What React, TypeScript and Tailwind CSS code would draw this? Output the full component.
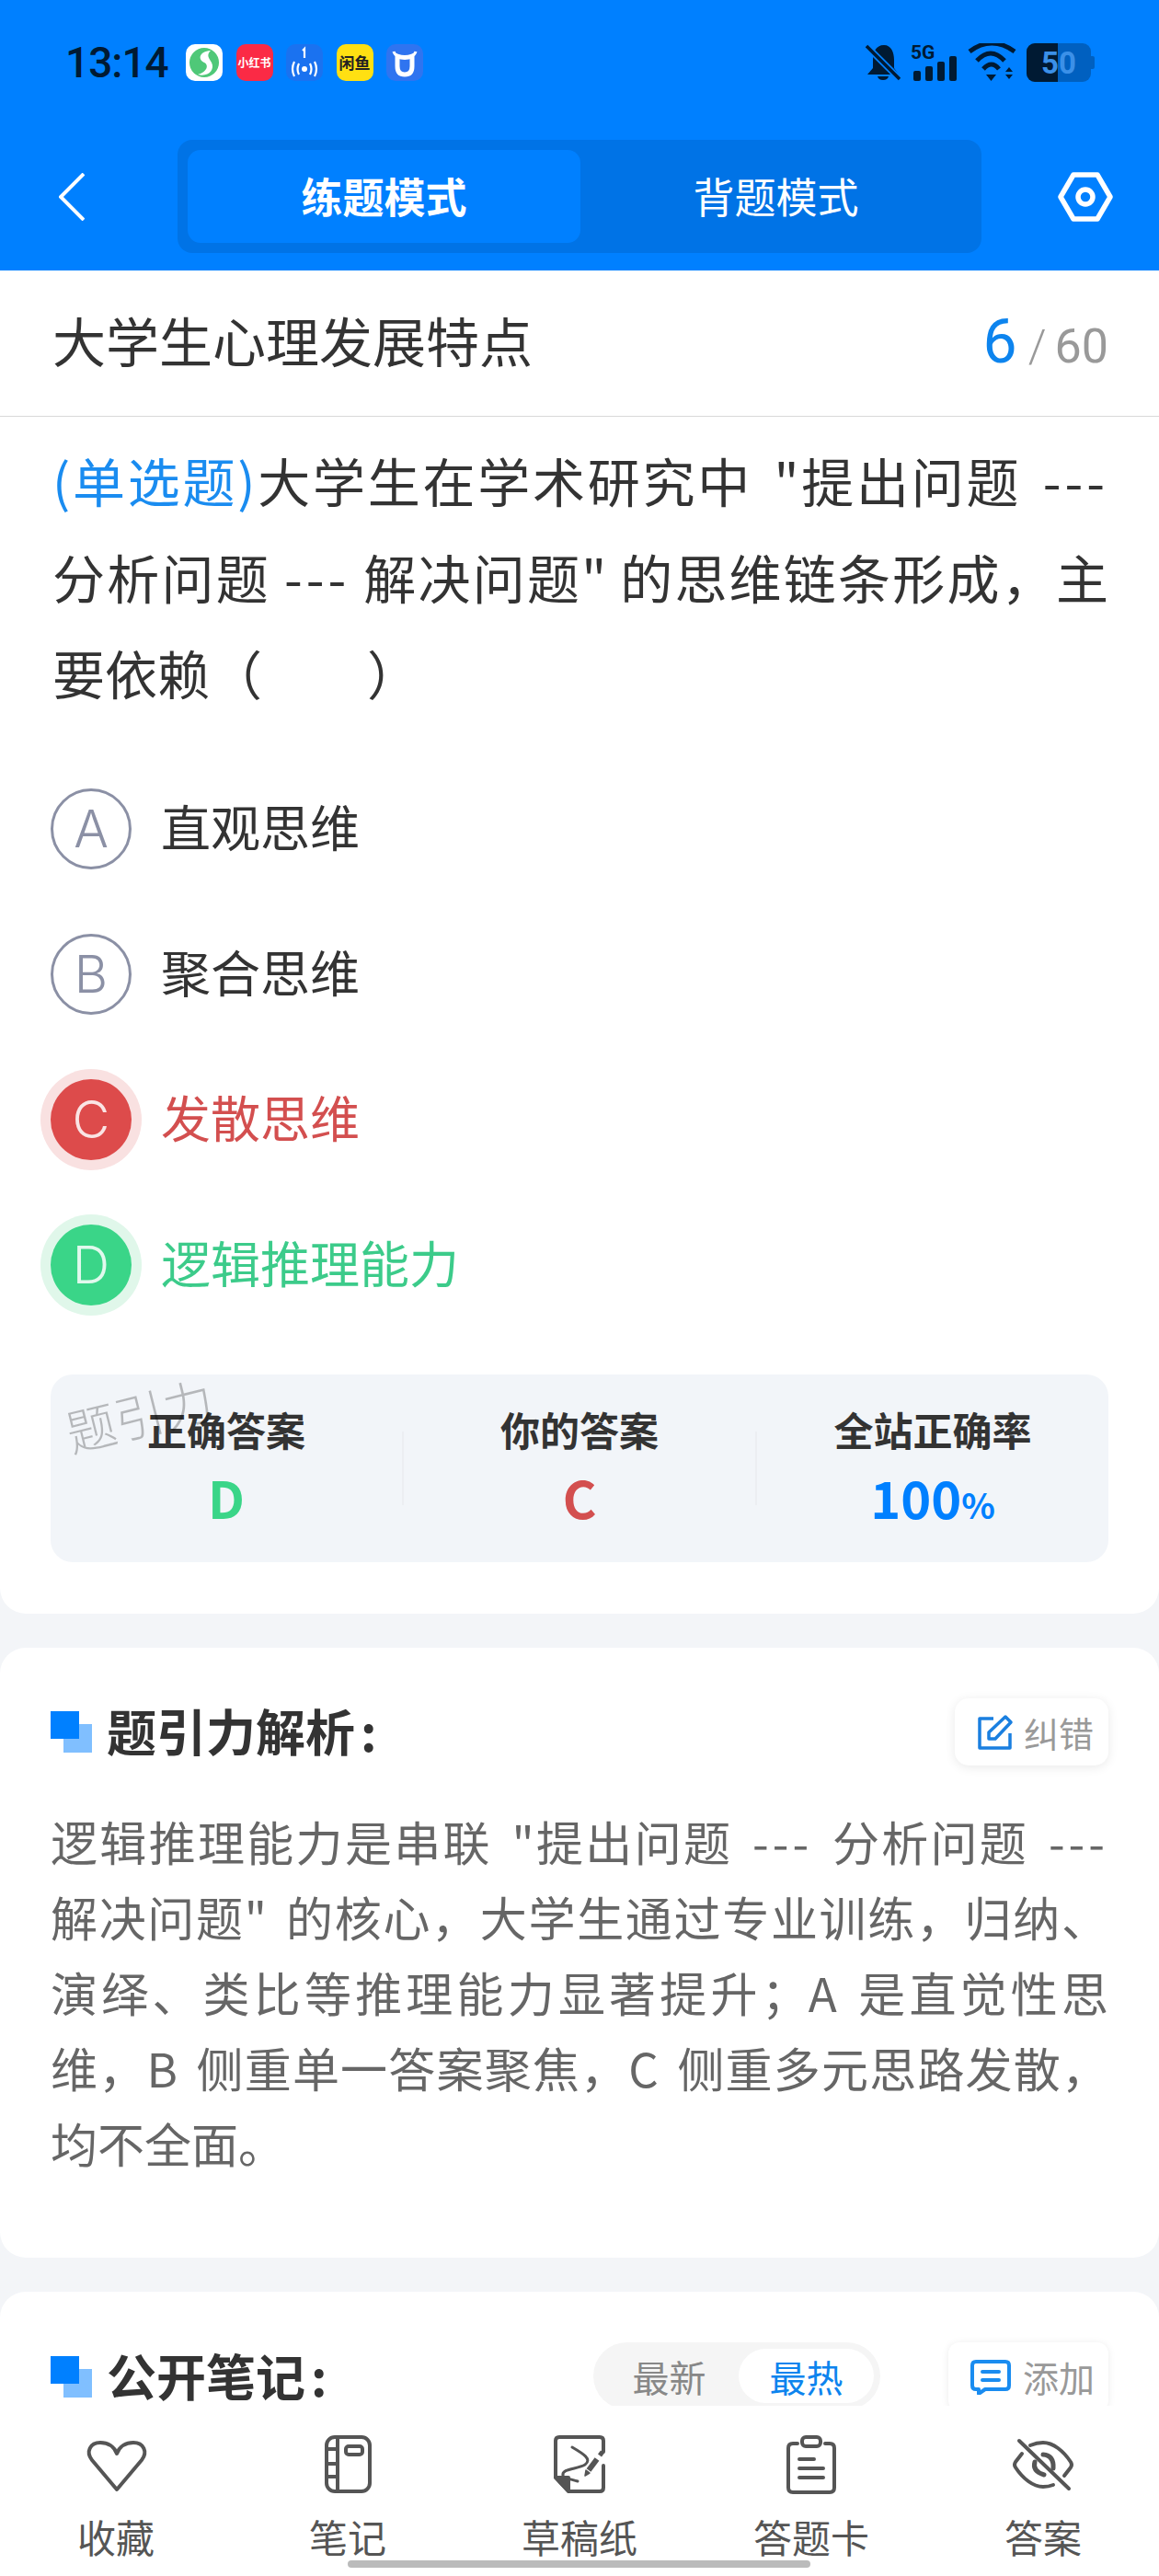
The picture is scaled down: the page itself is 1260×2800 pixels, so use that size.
import React from "react"

const CJK = "font-['Noto_Sans_CJK_SC','Noto_Sans',sans-serif]"

const SectionMark = () => (
  <span className="relative block w-[46px] h-[45px] shrink-0">
    <span className="absolute left-[14px] top-[14px] w-[31px] h-[31px] bg-[#80bfff]" />
    <span className="absolute left-0 top-0 w-[31px] h-[30px] bg-[#0080ff]" />
  </span>
)

const Dash = () => <span className="tracking-[4px]">---</span>

const Option = ({ letter, text, state }: { letter: string; text: string; state?: "wrong" | "right" }) => {
  if (state) {
    const wrong = state === "wrong"
    return (
      <div className="h-[158px] flex items-center">
        <div
          className={
            "w-[88px] h-[88px] rounded-full flex items-center justify-center text-[56px] font-['Inter',sans-serif] font-light text-white/85 " +
            (wrong ? "bg-[#dd4b4b] ring-[11px] ring-[#f9e1e1]" : "bg-[#3ad588] ring-[11px] ring-[#e0f7ea]")
          }
        >
          {letter}
        </div>
        <span className={"ml-[32px] -mt-[6px] text-[54px] " + (wrong ? "text-[#d34f4f]" : "text-[#3ccb8a]")}>{text}</span>
      </div>
    )
  }
  return (
    <div className="h-[158px] flex items-center">
      <div className="w-[88px] h-[88px] rounded-full border-[3px] border-[#8b90a5] flex items-center justify-center text-[56px] font-['Inter',sans-serif] font-light text-[#8b90a5]">
        {letter}
      </div>
      <span className="ml-[32px] -mt-[6px] text-[54px] text-[#333]">{text}</span>
    </div>
  )
}

const Stat = ({ label, children }: { label: string; children: React.ReactNode }) => (
  <div className="flex-1 flex flex-col items-center pb-[12px]">
    <div className="text-[43px] leading-[60px] font-bold text-[#333]">{label}</div>
    <div className="mt-[14px] h-[60px] flex items-baseline leading-[60px] font-semibold text-[56px]">{children}</div>
  </div>
)

const NavIcon = ({ children }: { children: React.ReactNode }) => (
  <svg viewBox="0 0 72 64" className="w-[72px] h-[64px]" fill="none" stroke="#555" strokeWidth="4" strokeLinecap="round" strokeLinejoin="round">
    {children}
  </svg>
)

const navItems = [
  {
    label: "收藏",
    icon: <path d="M37 59 L10 27 C3 18 8 8 19 8 C27 8 34 12 37 20 C40 12 47 8 55 8 C66 8 71 18 64 27 Z" />,
  },
  {
    label: "笔记",
    icon: (
      <>
        <rect x="13" y="2" width="47" height="59" rx="9" />
        <path d="M25 2 V61 M13 15 H25 M13 31 H25 M13 45 H25" />
        <rect x="34" y="12" width="18" height="9" rx="3" />
      </>
    ),
  },
  {
    label: "草稿纸",
    icon: (
      <>
        <path d="M62 18 V6 Q62 2 58 2 H14 Q10 2 10 6 V46 L24 61 H58 Q62 61 62 57 V33" />
        <path d="M10 46 H24 V61 Z" fill="#555" />
        <path d="M28 13 C40 20 50 26 42 32 C34 37 16 36 18 44 C19 47 28 48 34 50" strokeWidth="3" />
        <path d="M46 38 L55 26" strokeWidth="6" strokeLinecap="butt" />
        <path d="M42 44 L43 38 L47 41 Z" fill="#555" strokeWidth="1.5" />
        <path d="M58 22 L61 18" strokeWidth="5" strokeLinecap="butt" />
      </>
    ),
  },
  {
    label: "答题卡",
    icon: (
      <>
        <path d="M21 9 H16 Q11 9 11 14 V57 Q11 62 16 62 H56 Q61 62 61 57 V14 Q61 9 56 9 H51" />
        <rect x="26" y="2" width="20" height="10" rx="4" />
        <path d="M23 26 H39 M23 36 H49 M23 46 H49" />
      </>
    ),
  },
  {
    label: "答案",
    icon: (
      <>
        <path d="M13 20 L6 29 Q4 32 6 35 C14 47 25 56 36 56 Q42 56 47 54" />
        <path d="M22 11 Q29 8 36 8 C47 8 58 17 66 29 Q68 32 66 35 L59 44" />
        <path d="M27 29 Q24 39 37 43 M36 21 Q48 22 47 36" strokeWidth="5" />
        <path d="M10 6 L64 58" />
      </>
    ),
  },
]

const App = () => {
  return (
    <div className={"relative w-[1260px] h-[2800px] overflow-hidden bg-[#f3f5f8] " + CJK}>
      {/* blue header */}
      <div className="h-[294px] bg-[#0080ff] pl-[55px] pr-[50px]">
        <div className="h-[152px] pb-[16px] flex items-center">
          <span className="ml-[16px] w-[131px] text-[46px] font-['Roboto',sans-serif] font-medium text-[#001a33] tracking-[-1px]">13:14</span>
          <div className="flex gap-[14.5px] items-center">
            <div className="w-[40px] h-[40px] rounded-[10px] bg-white flex items-center justify-center">
              <svg viewBox="0 0 40 40" className="w-[40px] h-[40px]">
                <circle cx="20" cy="20" r="16" fill="#4fc878" />
                <path d="M27 7 C14 8 13 17 20 20 C26 23 22 31 13 33 C24 36 32 28 28 20 C25 15 22 12 27 7 Z" fill="#fff" />
              </svg>
            </div>
            <div className="w-[40px] h-[40px] rounded-[10px] bg-[#fb2a45] flex items-center justify-center text-[12px] font-bold text-white whitespace-nowrap">小红书</div>
            <div className="w-[40px] h-[40px] rounded-[10px] bg-[#1a72f0] flex items-center justify-center">
              <svg viewBox="0 0 40 40" className="w-[40px] h-[40px]" fill="none" stroke="#fff" strokeWidth="2.2">
                <path d="M18 7 L20 5 V15" />
                <circle cx="20" cy="27" r="3" fill="#fff" stroke="none" />
                <path d="M14 21 Q11 27 14 33 M26 21 Q29 27 26 33 M9 19 Q5 27 9 35 M31 19 Q35 27 31 35" />
              </svg>
            </div>
            <div className="w-[40px] h-[40px] rounded-[10px] bg-[#ffe012] flex items-center justify-center text-[17px] font-bold text-[#222] whitespace-nowrap">闲鱼</div>
            <div className="w-[40px] h-[40px] rounded-[10px] bg-[#2f74f0] flex items-center justify-center">
              <svg viewBox="0 0 40 40" className="w-[40px] h-[40px]" fill="none" stroke="#fff" strokeWidth="5">
                <path d="M12 13 V24 Q12 33 20 33 Q28 33 28 24 V13 Q20 16 12 13 Z" />
                <path d="M8 8 Q9 12 13 13 M32 8 Q31 12 27 13" strokeWidth="3" />
              </svg>
            </div>
          </div>
          <div className="ml-auto flex items-center gap-[11px] pr-[20px]">
            <svg viewBox="0 0 38 40" className="w-[38px] h-[40px]">
              <path d="M20 1 C11 1 8 9 8 17 V26 L2 33 H36 L31 26 V17 C31 9 28 1 20 1 Z M13 35 H25 Q24 39 19 39 Q14 39 13 35 Z" fill="#001a33" />
              <path d="M1 2 L37 38" stroke="#0080ff" strokeWidth="7" />
              <path d="M1 2 L37 38" stroke="#001a33" strokeWidth="3.5" />
            </svg>
            <div className="relative w-[51px] h-[42px]">
              <span className="absolute left-0 top-0 font-['Roboto',sans-serif] text-[21px] leading-[20px] font-bold text-[#001a33]">5G</span>
              <svg viewBox="0 0 51 42" className="w-[51px] h-[42px]">
                <rect x="3" y="30" width="8" height="11" rx="2" fill="#001a33" />
                <rect x="16" y="25" width="8" height="16" rx="2" fill="#001a33" />
                <rect x="29" y="20" width="8" height="21" rx="2" fill="#001a33" />
                <rect x="42" y="14" width="8" height="27" rx="2" fill="#001a33" />
              </svg>
            </div>
            <svg viewBox="0 0 53 42" className="w-[53px] h-[42px]" fill="none" stroke="#001a33" strokeWidth="5">
              <path d="M2 9 Q26 -9 51 9" />
              <path d="M10 19 Q25 3 40 19" />
              <path d="M17 28 Q26 18 34 28" />
              <path d="M20 34 H31 L25.5 41 Z M41 31 H49 L45 26 Z M41 34 H49 L45 39 Z" fill="#001a33" stroke="none" />
            </svg>
            <div className="relative w-[74px] h-[42px]">
              <div className="relative w-[70px] h-[42px] rounded-[9px] bg-[#0060c0] flex items-center justify-center text-[33px] font-['Roboto',sans-serif] font-bold text-[#3b90e8] leading-none">
                <span className="absolute left-0 top-0 bottom-0 w-[34px] rounded-l-[9px] bg-[#001a33]" />
                <span className="relative">50</span>
              </div>
              <span className="absolute right-0 top-[14px] w-[4px] h-[14px] rounded-r-[2px] bg-[#0060c0]" />
            </div>
          </div>
        </div>
        <div className="flex items-center h-[123px]">
          <svg viewBox="0 0 28 52" className="w-[28px] h-[52px] ml-[9px] shrink-0" fill="none" stroke="#fff" strokeWidth="4">
            <path d="M27 1 L2 26 L27 51" />
          </svg>
          <div className="ml-[101px] w-[874px] h-[123px] shrink-0 rounded-[16px] bg-[#0073e6] p-[11px] flex">
            <div className="w-[427px] h-[101px] rounded-[14px] bg-[#0080ff] flex items-center justify-center text-[45px] font-bold text-white pb-[2px]">练题模式</div>
            <div className="flex-1 flex items-center justify-center text-[45px] text-white pb-[2px]">背题模式</div>
          </div>
          <svg viewBox="0 0 60 54" className="w-[60px] h-[54px] ml-[83px] shrink-0" fill="none" stroke="#fff" strokeWidth="5.5" strokeLinejoin="round">
            <path d="M17 3 H43 L57 27 L43 51 H17 L3 27 Z" />
            <circle cx="30" cy="27" r="8" />
          </svg>
        </div>
      </div>

      {/* question card */}
      <div className="h-[1460px] bg-white rounded-b-[28px] overflow-hidden">
        <div className="h-[159px] border-b border-[#d9d9d9] pl-[57px] pr-[55px] flex items-center justify-between">
          <span className="text-[58px] text-[#333] -mt-[8px]">大学生心理发展特点</span>
          <span className="flex items-baseline -mt-[4px] font-['Roboto',sans-serif] text-[#999]">
            <span className="text-[66px] text-[#0d84ee]">6</span>
            <span className="text-[50px] ml-[12px] mr-[9px] font-light">/</span>
            <span className="text-[52px]">60</span>
          </span>
        </div>
        <div className="pl-[57px] pr-[55px] pt-[16px] text-[57px] leading-[104.5px] text-[#333]">
          <div className="text-justify [text-align-last:justify] [word-spacing:8px]">
            <span className="text-[#1a8cf0]">(单选题)</span>大学生在学术研究中 "提出问题 <Dash />
          </div>
          <div className="text-justify [text-align-last:justify]">分析问题 <Dash /> 解决问题" 的思维链条形成，主</div>
          <div>要依赖（　　）</div>
        </div>
        <div className="pl-[55px] pt-[39px]">
          <Option letter="A" text="直观思维" />
          <Option letter="B" text="聚合思维" />
          <Option letter="C" text="发散思维" state="wrong" />
          <Option letter="D" text="逻辑推理能力" state="right" />
        </div>
        <div className="relative mx-[55px] mt-[40px] h-[204px] rounded-[24px] bg-[#f2f5f9] flex items-center">
          <Stat label="正确答案"><span className="text-[#3ad588]">D</span></Stat>
          <div className="w-[2px] h-[80px] bg-[#eceef2]" />
          <Stat label="你的答案"><span className="text-[#d34f4f]">C</span></Stat>
          <div className="w-[2px] h-[80px] bg-[#eceef2]" />
          <Stat label="全站正确率">
            <span className="text-[#0080ff]">100<span className="text-[38px]">%</span></span>
          </Stat>
          <span className="absolute left-[15px] top-[2px] -rotate-[14deg] text-[54px] text-black/25 font-light">题引力</span>
        </div>
      </div>

      {/* analysis card */}
      <div className="mt-[37px] h-[663px] bg-white rounded-[28px] px-[55px] pt-[54px]">
        <div className="flex items-center h-[75px]">
          <SectionMark />
          <span className="ml-[15px] -mt-[4px] text-[54px] font-bold text-[#333]">题引力解析<span className="ml-[6px]">:</span></span>
          <div className="ml-auto w-[167px] h-[73px] rounded-[15px] bg-white shadow-[0_2px_12px_rgba(0,0,0,0.09)] flex items-center pl-[24px] gap-[11px]">
            <svg viewBox="0 0 40 40" className="w-[40px] h-[40px]" fill="none" stroke="#1a7fe0" strokeWidth="3.5" strokeLinejoin="round">
              <path d="M18 5 H3 V37 H36 V21" />
              <path d="M13 27 V20 L31 3 L37 9 L20 27 Z" />
            </svg>
            <span className="text-[38px] text-[#999] whitespace-nowrap">纠错</span>
          </div>
        </div>
        <div className="mt-[40px] text-[51px] leading-[82px] text-[#666] [word-spacing:8px]">
          <div className="text-justify [text-align-last:justify]">逻辑推理能力是串联 "提出问题 <Dash /> 分析问题 <Dash /></div>
          <div className="text-justify [text-align-last:justify]">解决问题" 的核心，大学生通过专业训练，归纳、</div>
          <div className="text-justify [text-align-last:justify]">演绎、类比等推理能力显著提升；A 是直觉性思</div>
          <div className="text-justify [text-align-last:justify]">维，B 侧重单一答案聚焦，C 侧重多元思路发散，</div>
          <div>均不全面。</div>
        </div>
      </div>

      {/* notes card, cut off by the bottom bar */}
      <div className="mt-[37px] h-[400px] bg-white rounded-t-[28px] px-[55px] pt-[55px]">
        <div className="flex items-center h-[75px]">
          <SectionMark />
          <span className="ml-[15px] -mt-[4px] text-[54px] font-bold text-[#333]">公开笔记<span className="ml-[6px]">:</span></span>
          <div className="ml-auto -mt-[2px] w-[312px] h-[73px] rounded-full bg-[#f5f5f5] p-[7px] flex items-center text-[40px]">
            <span className="w-[152px] text-center text-[#888]">最新</span>
            <span className="w-[148px] h-[59px] rounded-full bg-white flex items-center justify-center text-[#0d84ee]">最热</span>
          </div>
          <div className="ml-[74px] w-[174px] h-[75px] rounded-[12px] bg-white shadow-[0_1px_8px_rgba(0,0,0,0.08)] flex items-center pl-[24px] gap-[13px]">
            <svg viewBox="0 0 44 38" className="w-[44px] h-[38px]" fill="none" stroke="#1a8cf0" strokeWidth="4" strokeLinecap="round" strokeLinejoin="round">
              <path d="M6 2 H38 Q42 2 42 6 V28 Q42 32 38 32 H16 L9 37 V32 H6 Q2 32 2 28 V6 Q2 2 6 2 Z" />
              <path d="M13 13 H31 M13 22 H31" />
            </svg>
            <span className="text-[39px] text-[#999] whitespace-nowrap">添加</span>
          </div>
        </div>
      </div>

      {/* bottom bar */}
      <div className="absolute left-0 right-0 bottom-0 h-[185px] bg-white flex">
        {navItems.map((item) => (
          <div key={item.label} className="w-[252px] flex flex-col items-center pt-[32px]">
            <NavIcon>{item.icon}</NavIcon>
            <span className="mt-[18px] text-[42px] leading-[56px] text-[#555]">{item.label}</span>
          </div>
        ))}
        <div className="absolute left-[378px] bottom-[9px] w-[503px] h-[8px] rounded-full bg-[#bbb]" />
      </div>
    </div>
  )
}

export default App
